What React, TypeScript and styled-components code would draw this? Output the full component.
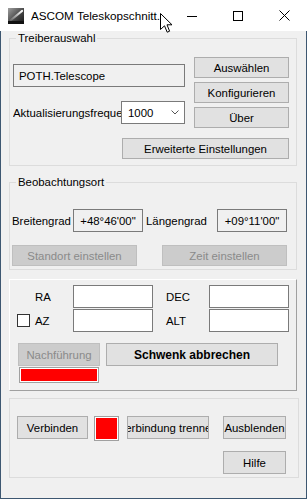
import React from "react";
import styled, { createGlobalStyle } from "styled-components";

const FONT = `"Liberation Sans", Arial, sans-serif`;

const GlobalStyle = createGlobalStyle`
  html, body { margin: 0; padding: 0; background: #f0f0f0; }
  body { font-family: ${FONT}; font-size: 11.4px; color: #000; }
  * { box-sizing: border-box; }
`;

const Window = styled.div`
  width: 307px;
  height: 499px;
  display: flex;
  flex-direction: column;
  position: relative;
  overflow: hidden;
  background: #fff;
`;

const TitleBar = styled.div`
  height: 31px;
  flex: none;
  display: flex;
  align-items: center;
  background: #fff;
`;

const AppIcon = styled.svg`
  flex: none;
  margin-left: 8px;
  margin-top: 1px;
`;

const TitleText = styled.span`
  flex: 1;
  margin-left: 7px;
  font-size: 11.7px;
  white-space: nowrap;
  overflow: hidden;
`;

const CaptionButton = styled.div`
  width: 46px;
  height: 31px;
  flex: none;
  display: flex;
  align-items: center;
  justify-content: center;
`;

const Cursor = styled.svg`
  position: absolute;
  left: 160px;
  top: 13px;
`;

const Client = styled.div`
  flex: 1;
  background: #f0f0f0;
  border: 1px solid #3d5771;
  border-top: none;
  padding: 7px 0 0 8px;
  display: flex;
  flex-direction: column;
`;

const GroupBox = styled.div<{ $h: number; $w?: number; $mt?: number }>`
  position: relative;
  flex: none;
  width: ${(p) => p.$w ?? 288}px;
  height: ${(p) => p.$h}px;
  margin-top: ${(p) => p.$mt ?? 0}px;
  border: 1px solid #dcdcdc;
`;

const Panel = styled.div<{ $h: number; $mt: number }>`
  flex: none;
  width: 288px;
  height: ${(p) => p.$h}px;
  margin-top: ${(p) => p.$mt}px;
  border: 1px solid;
  border-color: #ffffff #a0a0a0 #a0a0a0 #ffffff;
`;

const Legend = styled.span`
  position: absolute;
  top: -8px;
  left: 6px;
  padding: 0 2px;
  line-height: 14px;
  background: #f0f0f0;
  white-space: nowrap;
`;

const Button = styled.button<{ $w: number; $h?: number; $bold?: boolean }>`
  flex: none;
  width: ${(p) => p.$w}px;
  height: ${(p) => p.$h ?? 23}px;
  margin: 0;
  padding: 0;
  border: 1px solid #adadad;
  background: #e1e1e1;
  font-family: ${FONT};
  font-size: ${(p) => (p.$bold ? "12px" : "11.4px")};
  font-weight: ${(p) => (p.$bold ? 700 : 400)};
  color: #000;
  display: flex;
  align-items: center;
  justify-content: center;
  white-space: nowrap;
  overflow: hidden;
  &:disabled {
    background: #cccccc;
    border-color: #bfbfbf;
    color: #8a8a8a;
  }
`;

/* ---------- group 1 ---------- */

const G1Inner = styled.div`
  width: 276px;
  margin: 18px 0 0 3px;
`;

const TopArea = styled.div`
  display: grid;
  grid-template-columns: 172px 95px;
  column-gap: 9px;
`;

const LeftCol = styled.div`
  display: flex;
  flex-direction: column;
  gap: 14px;
  padding-top: 7px;
`;

const ButtonCol = styled.div`
  display: flex;
  flex-direction: column;
  gap: 4px;
`;

const ReadOnlyBox = styled.div`
  width: 172px;
  height: 23px;
  border: 1px solid #7a7a7a;
  background: #f0f0f0;
  display: flex;
  align-items: center;
  padding-left: 5px;
  white-space: nowrap;
`;

const ComboRow = styled.div`
  height: 23px;
  display: flex;
  align-items: center;
`;

const ClipLabel = styled.span<{ $w: number }>`
  flex: none;
  width: ${(p) => p.$w}px;
  overflow: hidden;
  white-space: nowrap;
`;

const Combo = styled.div`
  flex: none;
  width: 64px;
  height: 23px;
  border: 1px solid #7a7a7a;
  background: #fff;
  display: flex;
  align-items: center;
  justify-content: space-between;
  padding: 0 5px 0 6px;
`;

const RightRow = styled.div`
  display: flex;
  justify-content: flex-end;
  margin-top: 10px;
`;

/* ---------- group 2 ---------- */

const CoordRow = styled.div`
  height: 23px;
  margin-top: 26px;
  padding-left: 2px;
  display: flex;
  align-items: center;
`;

const CoordLabel = styled.span<{ $w: number; $pl?: number }>`
  flex: none;
  width: ${(p) => p.$w}px;
  padding-left: ${(p) => p.$pl ?? 0}px;
  white-space: nowrap;
`;

const ValueBox = styled.div`
  flex: none;
  width: 70px;
  height: 23px;
  border: 1px solid #7a7a7a;
  background: #f0f0f0;
  display: flex;
  align-items: center;
  justify-content: center;
  white-space: nowrap;
`;

const ButtonRow = styled.div<{ $mt: number; $pl: number; $gap?: number }>`
  display: flex;
  align-items: flex-start;
  margin-top: ${(p) => p.$mt}px;
  padding-left: ${(p) => p.$pl}px;
  gap: ${(p) => p.$gap ?? 0}px;
`;

/* ---------- group 3 ---------- */

const PosGrid = styled.div`
  margin-top: 5px;
  padding-left: 7px;
  display: grid;
  grid-template-columns: 18px 38px 80px 13px 43px 80px;
  grid-auto-rows: 23px;
  row-gap: 1px;
  align-items: center;
`;

const InputBox = styled.div`
  width: 80px;
  height: 23px;
  border: 1px solid #7a7a7a;
  background: #fff;
`;

const CheckBox = styled.div`
  width: 13px;
  height: 13px;
  border: 1px solid #333;
  background: #fff;
`;

const GridLabel = styled.span`
  white-space: nowrap;
`;

const Stack = styled.div`
  display: flex;
  flex-direction: column;
  gap: 1px;
`;

const Indicator = styled.div<{ $w: number; $h: number; $ml?: number }>`
  flex: none;
  width: ${(p) => p.$w}px;
  height: ${(p) => p.$h}px;
  margin-left: ${(p) => p.$ml ?? 0}px;
  border: 1px solid #a0a0a0;
  box-shadow: inset 0 0 0 1px #fff;
  background: #ff0000;
`;

const Spaced = styled.div<{ $ml: number }>`
  margin-left: ${(p) => p.$ml}px;
  display: flex;
`;

export default function App() {
  return (
    <>
      <GlobalStyle />
      <Window>
        <TitleBar>
          <AppIcon width="16" height="16" viewBox="0 0 16 16">
            <defs>
              <linearGradient id="icbg" x1="0" y1="0" x2="16" y2="16" gradientUnits="userSpaceOnUse">
                <stop offset="0" stopColor="#a0a0a0" />
                <stop offset="0.55" stopColor="#474747" />
                <stop offset="1" stopColor="#151515" />
              </linearGradient>
              <linearGradient id="icst" x1="3" y1="12" x2="14" y2="3" gradientUnits="userSpaceOnUse">
                <stop offset="0" stopColor="#ffffff" stopOpacity="0.15" />
                <stop offset="1" stopColor="#ffffff" stopOpacity="1" />
              </linearGradient>
            </defs>
            <rect width="16" height="16" fill="url(#icbg)" />
            <rect y="13" width="16" height="3" fill="#111" />
            <path d="M3 12 L14 3" stroke="url(#icst)" strokeWidth="2.2" strokeLinecap="round" />
          </AppIcon>
          <TitleText>ASCOM Teleskopschnitt...</TitleText>
          <CaptionButton>
            <svg width="10" height="10" viewBox="0 0 10 10">
              <line x1="0" y1="5.5" x2="10" y2="5.5" stroke="#000" strokeWidth="1" />
            </svg>
          </CaptionButton>
          <CaptionButton>
            <svg width="10" height="10" viewBox="0 0 10 10">
              <rect x="0.5" y="0.5" width="9" height="9" fill="none" stroke="#000" strokeWidth="1" />
            </svg>
          </CaptionButton>
          <CaptionButton>
            <svg width="11" height="11" viewBox="0 0 11 11">
              <path d="M0.5 0.5 L10.5 10.5 M10.5 0.5 L0.5 10.5" stroke="#000" strokeWidth="1" />
            </svg>
          </CaptionButton>
        </TitleBar>
        <Cursor width="13" height="21" viewBox="0 0 13 21">
          <path
            d="M0.5 0.5 L0.5 16.5 L4.5 12.8 L7.2 19.2 L9.6 18.2 L7 11.8 L12 11.8 Z"
            fill="#fff"
            stroke="#000"
            strokeWidth="1"
            strokeLinejoin="miter"
          />
        </Cursor>

        <Client>
          <GroupBox $h={128}>
            <Legend>Treiberauswahl</Legend>
            <G1Inner>
              <TopArea>
                <LeftCol>
                  <ReadOnlyBox>POTH.Telescope</ReadOnlyBox>
                  <ComboRow>
                    <ClipLabel $w={108}>Aktualisierungsfrequenz</ClipLabel>
                    <Combo>
                      <span>1000</span>
                      <svg width="8" height="5" viewBox="0 0 8 5">
                        <polyline points="0.5,0.5 4,4 7.5,0.5" fill="none" stroke="#555" strokeWidth="1" />
                      </svg>
                    </Combo>
                  </ComboRow>
                </LeftCol>
                <ButtonCol>
                  <Button $w={95} $h={21}>Auswählen</Button>
                  <Button $w={95} $h={21}>Konfigurieren</Button>
                  <Button $w={95} $h={21}>Über</Button>
                </ButtonCol>
              </TopArea>
              <RightRow>
                <Button $w={167} $h={21}>Erweiterte Einstellungen</Button>
              </RightRow>
            </G1Inner>
          </GroupBox>

          <GroupBox $h={88} $mt={16}>
            <Legend>Beobachtungsort</Legend>
            <CoordRow>
              <CoordLabel $w={61}>Breitengrad</CoordLabel>
              <ValueBox>+48°46'00"</ValueBox>
              <CoordLabel $w={74} $pl={3}>Längengrad</CoordLabel>
              <ValueBox>+09°11'00"</ValueBox>
            </CoordRow>
            <ButtonRow $mt={13} $pl={2} $gap={25}>
              <Button $w={125} $h={21} disabled>Standort einstellen</Button>
              <Button $w={125} $h={21} disabled>Zeit einstellen</Button>
            </ButtonRow>
          </GroupBox>

          <Panel $h={112} $mt={9}>
            <PosGrid>
              <span />
              <GridLabel>RA</GridLabel>
              <InputBox />
              <span />
              <GridLabel>DEC</GridLabel>
              <InputBox />
              <CheckBox />
              <GridLabel>AZ</GridLabel>
              <InputBox />
              <span />
              <GridLabel>ALT</GridLabel>
              <InputBox />
            </PosGrid>
            <ButtonRow $mt={11} $pl={8}>
              <Stack>
                <Button $w={82} disabled>Nachführung</Button>
                <Indicator $w={80} $h={16} $ml={1} />
              </Stack>
              <Spaced $ml={6}>
                <Button $w={172} $bold>Schwenk abbrechen</Button>
              </Spaced>
            </ButtonRow>
          </Panel>

          <GroupBox $h={80} $w={290} $mt={7}>
            <ButtonRow $mt={17} $pl={7}>
              <Button $w={71}>Verbinden</Button>
              <Indicator $w={25} $h={25} $ml={6} />
              <Spaced $ml={8}>
                <Button $w={82}>Verbindung trennen</Button>
              </Spaced>
              <Spaced $ml={14}>
                <Button $w={63}>Ausblenden</Button>
              </Spaced>
            </ButtonRow>
            <ButtonRow $mt={10} $pl={213}>
              <Button $w={63}>Hilfe</Button>
            </ButtonRow>
          </GroupBox>
        </Client>
      </Window>
    </>
  );
}
